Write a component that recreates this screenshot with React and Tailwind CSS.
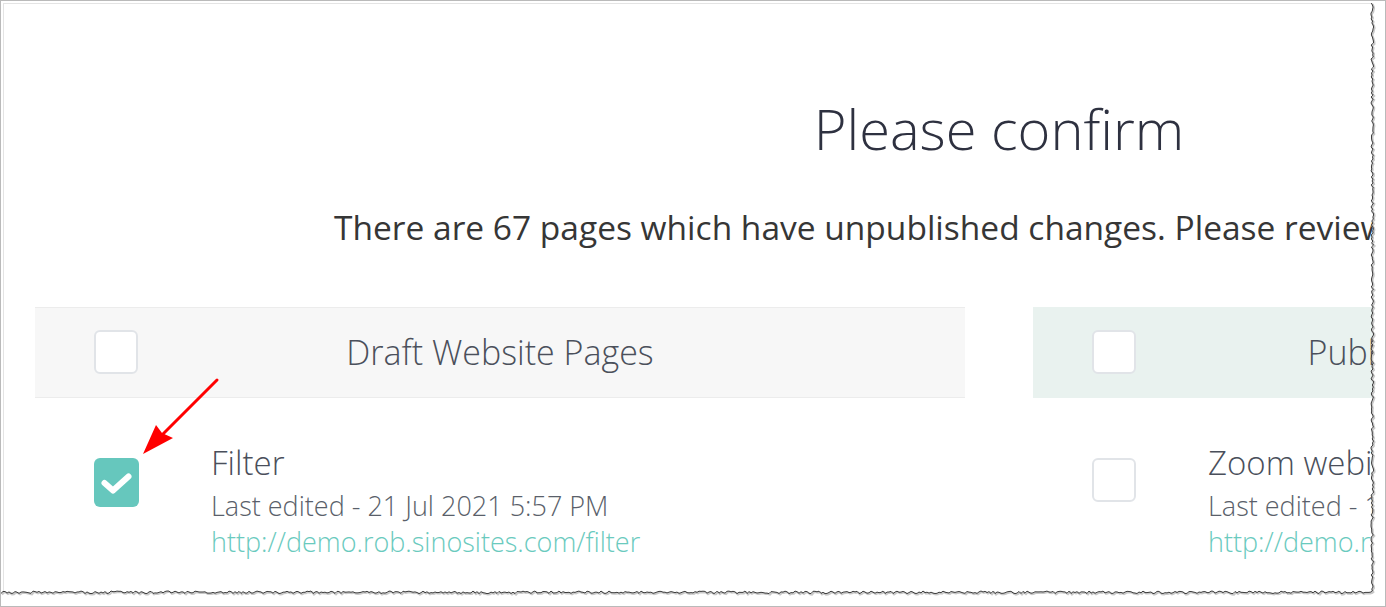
import React from 'react';

const rand = (i) => {
    const s = Math.sin(i * 127.1 + 3.7) * 43758.5453;
    return s - Math.floor(s);
};

// jagged torn edge along right and bottom of the captured panel
function buildTorn() {
    const pts = [];
    for (let y = 3, i = 0; y <= 592; y += 2, i++) {
        pts.push([1371 + rand(i) * 2.6, y]);
    }
    for (let x = 1371, i = 0; x >= 1; x -= 2, i++) {
        pts.push([x, 591 + rand(i + 900) * 2.6]);
    }
    const line = pts.map((p, i) => `${i ? 'L' : 'M'}${p[0].toFixed(1)} ${p[1].toFixed(1)}`).join(' ');
    const fill = `M1371 1 ${line.replace(/^M/, 'L')} L1 606 L1386 606 L1386 1 Z`;
    return { line, fill };
}

const torn = buildTorn();

function CheckBox({ checked }) {
    if (checked) {
        return (
            <div className="w-[45px] h-[49px] rounded-[6px] bg-[#66c7bd] shrink-0">
                <svg width="45" height="49" viewBox="0 0 45 49">
                    <path d="M10.5 25 L19 32.5 L34.5 18.5" fill="none" stroke="#fff" strokeWidth="6" strokeLinecap="round" strokeLinejoin="round" />
                </svg>
            </div>
        );
    }
    return <div className="w-[44px] h-[44px] rounded-[6px] border-2 border-[#e1e4e8] bg-white shrink-0" />;
}

function Column({ title, headerClass, page }) {
    return (
        <div className="w-[930px]">
            <div className={`h-[91px] grid grid-cols-[140px_1fr_140px] items-center ${headerClass}`}>
                <div className="pl-[59px]">
                    <CheckBox />
                </div>
                <div className="text-center text-[34px] font-light text-[#4b505b] whitespace-nowrap">{title}</div>
                <div />
            </div>
            <div className="flex pt-[45px]">
                <div className="pl-[59px] pt-[15px]">
                    <CheckBox checked={page.checked} />
                </div>
                <div className="pl-[72px] whitespace-nowrap">
                    <div className="text-[33px] leading-[40px] font-light text-[#4a4f5b]">{page.name}</div>
                    <div className="mt-[5px] text-[27px] leading-[36px] font-light text-[#5a5f6a]">{page.edited}</div>
                    <div className="text-[27px] leading-[36px] font-light text-[#6acabe]">{page.url}</div>
                </div>
            </div>
        </div>
    );
}

export default function App() {
    return (
        <div className="relative w-[1386px] h-[607px] border border-[#bababa] bg-white p-[2px] overflow-hidden" style={{ fontFamily: '"Open Sans", "Noto Sans", sans-serif' }}>
            <div className="relative w-[1380px] h-[600px] overflow-hidden border-l border-t border-[#e4e4e4] bg-white">
                <div className="w-[1990px] px-[31px]">
                    <h1 className="mt-[96px] text-center text-[56px] leading-none font-light text-[#2e3140]">Please confirm</h1>
                    <p className="mt-[55px] pl-[299px] text-[33.5px] leading-none text-[#363636] whitespace-nowrap">
                        There are 67 pages which have unpublished changes. Please review the changes below and confirm.
                    </p>
                    <div className="mt-[62px] flex gap-[68px]">
                        <Column
                            title="Draft Website Pages"
                            headerClass="bg-[#f7f7f7] border-y border-[#ececec]"
                            page={{
                                checked: true,
                                name: 'Filter',
                                edited: 'Last edited - 21 Jul 2021 5:57 PM',
                                url: 'http://demo.rob.sinosites.com/filter',
                            }}
                        />
                        <Column
                            title="Published Website Pages"
                            headerClass="bg-[#e9f2ef] border-y border-[#e9f2ef]"
                            page={{
                                checked: false,
                                name: 'Zoom webinar',
                                edited: 'Last edited - 19 Jul 2021 3:12 PM',
                                url: 'http://demo.rob.sinosites.com/zoom-webinar',
                            }}
                        />
                    </div>
                </div>
            </div>

            {/* red annotation arrow */}
            <svg className="absolute left-0 top-0 pointer-events-none" width="1384" height="605" viewBox="1 1 1384 605">
                <line x1="217" y1="380" x2="155" y2="442" stroke="#ff0000" strokeWidth="3" strokeLinecap="round" />
                <polygon points="143,454 156,425 162,433 173,438" fill="#ff0000" />
            </svg>

            {/* torn edge of the screenshot */}
            <svg className="absolute left-0 top-0 pointer-events-none" width="1384" height="605" viewBox="1 1 1384 605">
                <path d={torn.fill} fill="#fff" />
                <path d={torn.line} fill="none" stroke="#c8c8c8" strokeWidth="2" transform="translate(1 1)" />
                <path d={torn.line} fill="none" stroke="#3c3c3c" strokeWidth="1" />
            </svg>
        </div>
    );
}
